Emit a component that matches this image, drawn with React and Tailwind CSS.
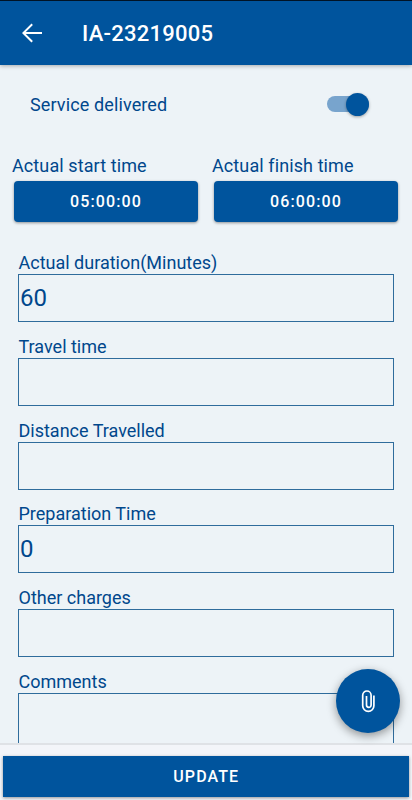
import { useState } from "react";

const FIELDS = [
    { id: "duration", label: "Actual duration(Minutes)", value: "60" },
    { id: "travelTime", label: "Travel time", value: "" },
    { id: "distance", label: "Distance Travelled", value: "" },
    { id: "preparation", label: "Preparation Time", value: "0" },
    { id: "charges", label: "Other charges", value: "" },
];

const TimePicker = ({ label, time }) => (
    <div className="w-[200px] flex flex-col">
        <span className="h-[26px] leading-[26px] text-[18px] tracking-[0.1px] whitespace-nowrap">{label}</span>
        <button className="ml-0.5 mt-0.5 h-[41px] w-[184px] rounded-[4px] bg-[#00549d] text-[16px] font-medium tracking-[1.1px] text-white shadow-[0_1px_3px_rgba(0,0,0,0.4)]">
            {time}
        </button>
    </div>
);

const Field = ({ id, label, value, onChange }) => (
    <div className="h-[83.8px] flex flex-col">
        <label htmlFor={id} className="h-[26px] pl-[0.5px] pt-px leading-[27px] text-[18px] whitespace-nowrap">
            {label}
        </label>
        <input
            id={id}
            className="h-12 w-full rounded-none border border-[#2f6c9c] bg-transparent pl-px text-[24px] outline-none"
            value={value}
            onChange={(e) => onChange(id, e.target.value)}
        />
    </div>
);

const App = () => {
    const [delivered, setDelivered] = useState(true);

    const [formData, setFormData] = useState(Object.fromEntries(FIELDS.map((f) => [f.id, f.value])));

    const handleChange = (id, value) => {
        setFormData({ ...formData, [id]: value });
    };

    return (
        <div className="relative flex h-[800px] w-[412px] flex-col overflow-hidden bg-[#edf3f7] font-[Roboto,sans-serif] text-[#00478c]">
            <header className="z-10 flex h-[65px] shrink-0 items-center border-t border-[#001326] bg-[#00549d] pl-5 text-white shadow-[0_1px_4px_rgba(0,0,0,0.3)]">
                <button aria-label="Back">
                    <svg width="24" height="24" viewBox="0 0 24 24" fill="currentColor">
                        <path d="M22 11H5.8l7.1-7.1L11.5 2.5 2 12l9.5 9.5 1.4-1.4L5.8 13H22z" />
                    </svg>
                </button>
                <h1 className="ml-[38px] text-[22px] font-medium tracking-[0.25px]">IA-23219005</h1>
            </header>

            <main className="flex min-h-0 flex-1 flex-col overflow-hidden">
                <div className="flex h-[78px] shrink-0 items-center justify-between pl-[30px] pr-[43px]">
                    <span className="text-[18px] tracking-[0.12px]">Service delivered</span>
                    <button
                        role="switch"
                        aria-checked={delivered}
                        aria-label="Service delivered"
                        className="flex h-4 w-[42px] items-center justify-end rounded-full bg-[#78a4cd]"
                        onClick={() => setDelivered(!delivered)}
                    >
                        <span className="size-[23px] rounded-full bg-[#00549d] shadow-[0_1px_3px_rgba(0,0,0,0.35)]" />
                    </button>
                </div>

                <div className="mt-2.5 flex shrink-0 pl-3">
                    <TimePicker label="Actual start time" time="05:00:00" />
                    <TimePicker label="Actual finish time" time="06:00:00" />
                </div>

                <div className="mt-[26px] flex shrink-0 flex-col pl-[18px] pr-[18px]">
                    {FIELDS.map((f) => (
                        <Field key={f.id} id={f.id} label={f.label} value={formData[f.id]} onChange={handleChange} />
                    ))}
                    <label htmlFor="comments" className="h-[26px] pl-[0.5px] pt-px leading-[27px] text-[18px]">
                        Comments
                    </label>
                    <textarea
                        id="comments"
                        className="h-[100px] w-full resize-none rounded-none border border-[#2f6c9c] bg-transparent text-[24px] outline-none"
                    />
                </div>
            </main>

            <button
                aria-label="Attach file"
                className="absolute left-[336px] top-[669px] flex size-16 items-center justify-center rounded-full bg-[#00549d] text-white shadow-[0_3px_10px_rgba(0,0,0,0.4)]"
            >
                <svg width="14" height="23" viewBox="0 0 14 23" fill="none" stroke="currentColor" strokeWidth="1.7">
                    <path d="M12.9 5.5v10.3a5.6 5.6 0 0 1-11.2 0V5.2a4.2 4.2 0 0 1 8.4 0v9.9a2.3 2.3 0 0 1-4.6 0V6" />
                </svg>
            </button>

            <footer className="h-[57px] shrink-0 border-t-2 border-[#dfe2e6] bg-[#f3f5f9] pl-[2.5px] pr-[3px] pt-[11px]">
                <button className="h-[41px] w-full bg-[#00549d] pl-px text-[16px] font-medium tracking-[1.1px] text-white shadow-[0_1px_3px_rgba(0,0,0,0.4)]">
                    UPDATE
                </button>
            </footer>
        </div>
    );
};

export default App;
